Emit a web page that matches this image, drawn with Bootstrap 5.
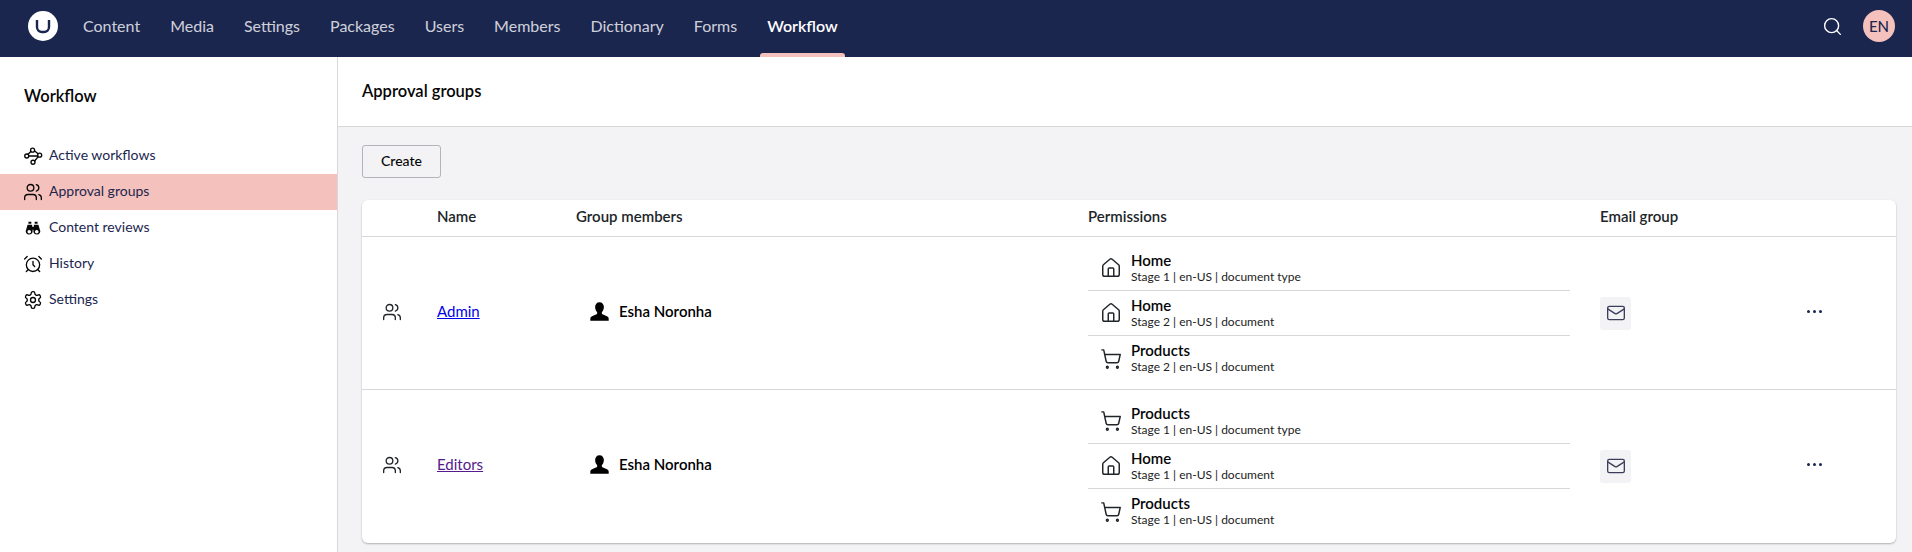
<!DOCTYPE html>
<html lang="en">
<head>
  <meta charset="UTF-8">
  <meta name="viewport" content="width=device-width, initial-scale=1.0">
  <title>Workflow - Approval groups</title>
  <link href="https://cdn.jsdelivr.net/npm/bootstrap@5.3.0/dist/css/bootstrap.min.css" rel="stylesheet">
  <style>
    body {
      font-family: Lato, "Liberation Sans", sans-serif;
      font-size: 14px;
      color: #060606;
      background-color: #f3f3f5;
    }
    .ico {
      fill: none;
      stroke: currentColor;
      stroke-width: 1.6;
      stroke-linecap: round;
      stroke-linejoin: round;
      flex-shrink: 0;
    }
    .ico-fill { fill: currentColor; stroke: none; flex-shrink: 0; }

    /* top bar */
    .topbar { height: 57px; background-color: #1b264f; padding: 0 17px 0 28px; }
    .brand-mark { width: 30px; height: 30px; margin-top: -5px; }
    .top-links { margin-left: 17px; gap: 14px; height: 57px; }
    .top-link {
      position: relative;
      padding: 0 8px;
      height: 57px;
      line-height: 52px;
      font-size: 16px;
      color: rgba(255, 255, 255, .8);
      text-decoration: none;
    }
    .top-link.on { color: #fff; font-weight: 600; }
    .top-link.on::after {
      content: "";
      position: absolute;
      left: 1px;
      right: 1px;
      bottom: 0;
      height: 4px;
      background-color: #f5c1bc;
      border-radius: 3px 3px 0 0;
    }
    .top-search { width: 21px; height: 21px; color: #fff; margin-right: 20px; margin-top: -5px; }
    .lang-dot {
      width: 32px;
      height: 32px;
      margin-top: -5px;
      font-size: 15px;
      font-weight: 500;
      color: #1b264f;
      background-color: #f5c1bc;
    }

    /* side menu */
    .side-menu { width: 338px; flex-shrink: 0; background-color: #fff; border-right: 1px solid #d8d7d9; }
    .side-title { font-size: 16.5px; font-weight: 600; padding: 0 24px; height: 81px; line-height: 79px; }
    .side-item {
      height: 36px;
      padding-left: 23px;
      padding-bottom: 3px;
      gap: 6px;
      color: #1b264f;
      text-decoration: none;
    }
    .side-item svg { margin-top: 3px; }
    .side-item.on { background-color: #f5c1bc; }
    .side-item .ico, .side-item .ico-fill { color: #060606; }

    /* main */
    .page-head { height: 70px; padding: 0 24px; line-height: 68px; font-size: 16.5px; font-weight: 600; background-color: #fff; border-bottom: 1px solid #d8d7d9; }
    .page-body { padding: 18px 16px 0 24px; }
    .create-btn {
      width: 79px;
      height: 33px;
      padding: 0 0 2px;
      font-size: 14px;
      font-weight: 500;
      color: #060606;
      border: 1px solid #b4b4b8;
      border-radius: 3px;
      margin-bottom: 22px;
    }

    .group-box { background-color: #fff; border-radius: 6px; box-shadow: 0 1px 2px rgba(0, 0, 0, .28); }
    .group-table { table-layout: fixed; border-collapse: separate; border-spacing: 0; --bs-table-bg: transparent; }
    .group-table th {
      height: 37px;
      padding: 0 12px 3px;
      font-size: 15px;
      font-weight: 600;
      vertical-align: middle;
      border-bottom: 1px solid #d8d7d9;
    }
    .group-table td {
      padding: 0 12px 4px;
      font-size: 15px;
      vertical-align: middle;
      border-bottom: 1px solid #d8d7d9;
    }
    .group-table tr:last-child td { border-bottom-color: transparent; }
    .group-table .perm-cell { padding: 0 12px; }
    .group-table .users-cell { padding-left: 20px; padding-bottom: 2px; }
    .group-table .mail-cell { padding-bottom: 0; }
    .w-icon { width: 63px; }
    .w-name { width: 139px; }
    .w-members { width: 512px; }
    .w-perms { width: 512px; }
    .w-email { width: 201px; }
    .name-link { color: #0000ee; }
    .name-link.seen { color: #551a8b; }
    .member { padding-left: 13px; gap: 9px; font-weight: 600; color: #000; }

    .perm-list { padding: 9px 6px 8px 0; }
    .perm-row { height: 45px; gap: 9px; padding-left: 12px; border-bottom: 1px solid #d8d7d9; }
    .perm-row:last-child { border-bottom: 0; }
    .perm-name { font-size: 15px; font-weight: 600; line-height: 17px; margin-top: -1px; color: #060606; }
    .perm-sub { font-size: 12px; line-height: 15px; color: #222; }

    .mail-btn {
      width: 31px;
      height: 33px;
      padding: 0;
      color: #3a3d5c;
      background-color: #f3f3f5;
      border: 0;
      border-radius: 3px;
    }
    .dots { gap: 3px; padding-left: 6px; }
    .dots i { width: 3px; height: 3px; border-radius: 50%; background-color: #1b264f; display: block; }
  </style>
</head>
<body class="d-flex flex-column vh-100 overflow-hidden">

  <svg width="0" height="0" class="position-absolute">
    <symbol id="i-users" viewBox="0 0 24 24"><path d="M16 21v-2a4 4 0 0 0-4-4H6a4 4 0 0 0-4 4v2"/><circle cx="9" cy="7" r="4"/><path d="M22 21v-2a4 4 0 0 0-3-3.87"/><path d="M16 3.13a4 4 0 0 1 0 7.75"/></symbol>
    <symbol id="i-flow" viewBox="0 0 24 24"><circle cx="4.500" cy="12" r="2.400"/><circle cx="11.500" cy="5" r="2.400"/><circle cx="20" cy="11" r="2.400"/><circle cx="12" cy="19.500" r="2.400"/><path d="M7 12h10.500M6 10l3.500-3.500M14 6l3.800 3M18 13l-4 5"/></symbol>
    <symbol id="i-alarm" viewBox="0 0 24 24"><circle cx="12" cy="13" r="8"/><path d="M12 9v4l2 2"/><path d="M5 3 2 6"/><path d="m22 6-3-3"/><path d="M6.38 18.7 4 21"/><path d="M17.64 18.67 20 21"/></symbol>
    <symbol id="i-gear" viewBox="0 0 24 24"><path d="M12.22 2h-.44a2 2 0 0 0-2 2v.18a2 2 0 0 1-1 1.73l-.43.25a2 2 0 0 1-2 0l-.15-.08a2 2 0 0 0-2.73.73l-.22.38a2 2 0 0 0 .73 2.73l.15.1a2 2 0 0 1 1 1.72v.51a2 2 0 0 1-1 1.74l-.15.09a2 2 0 0 0-.73 2.73l.22.38a2 2 0 0 0 2.73.73l.15-.08a2 2 0 0 1 2 0l.43.25a2 2 0 0 1 1 1.73V20a2 2 0 0 0 2 2h.44a2 2 0 0 0 2-2v-.18a2 2 0 0 1 1-1.73l.43-.25a2 2 0 0 1 2 0l.15.08a2 2 0 0 0 2.73-.73l.22-.39a2 2 0 0 0-.73-2.73l-.15-.08a2 2 0 0 1-1-1.74v-.5a2 2 0 0 1 1-1.74l.15-.09a2 2 0 0 0 .73-2.73l-.22-.38a2 2 0 0 0-2.73-.73l-.15.08a2 2 0 0 1-2 0l-.43-.25a2 2 0 0 1-1-1.73V4a2 2 0 0 0-2-2z"/><circle cx="12" cy="12" r="3"/></symbol>
    <symbol id="i-home" viewBox="0 0 24 24"><path d="M15 21v-8a1 1 0 0 0-1-1h-4a1 1 0 0 0-1 1v8"/><path d="M3 10a2 2 0 0 1 .709-1.528l7-5.999a2 2 0 0 1 2.582 0l7 5.999A2 2 0 0 1 21 10v9a2 2 0 0 1-2 2H5a2 2 0 0 1-2-2z"/></symbol>
    <symbol id="i-cart" viewBox="0 0 24 24"><circle cx="8" cy="21" r="1"/><circle cx="19" cy="21" r="1"/><path d="M2.05 2.05h2l2.66 12.42a2 2 0 0 0 2 1.58h9.78a2 2 0 0 0 1.95-1.57l1.65-7.43H5.12"/></symbol>
    <symbol id="i-mail" viewBox="0 0 24 24"><rect width="20" height="16" x="2" y="4" rx="2"/><path d="m22 7-8.97 5.7a1.94 1.94 0 0 1-2.06 0L2 7"/></symbol>
    <symbol id="i-search" viewBox="0 0 24 24"><circle cx="11" cy="11" r="8"/><path d="m21 21-4.3-4.3"/></symbol>
    <symbol id="i-binoculars" viewBox="0 0 24 24"><path fill-rule="evenodd" d="M6.500 4.500H10V7H6.500zM14 4.500h3.500V7H14zM5.500 8H11v2.500h2V8h5.500l2.300 8a4.200 4.200 0 0 1-8.300.5V14h-1v2.500a4.200 4.200 0 0 1-8.300-.5zM5.300 16.500a2.200 2.200 0 1 0 4.400 0a2.200 2.200 0 1 0-4.400 0zM14.300 16.500a2.200 2.200 0 1 0 4.400 0a2.200 2.200 0 1 0-4.400 0z"/></symbol>
    <symbol id="i-user" viewBox="0 0 24 24"><path d="M12 1.500c3.200 0 5 2.400 5 5.400 0 2.500-1 4.600-2.300 5.800v1.500c0 1 3.400 2 5.800 3.200 1.400.7 2 1.600 2 3.100v2H1.500v-2c0-1.500.6-2.400 2-3.100 2.400-1.200 5.800-2.200 5.800-3.200v-1.500C8 11.500 7 9.400 7 6.900c0-3 1.800-5.400 5-5.400z"/></symbol>
  </svg>

  <!-- Top bar -->
  <header class="topbar d-flex align-items-center flex-shrink-0">
    <svg class="brand-mark" viewBox="0 0 30 30">
      <circle cx="15" cy="15" r="15" fill="#fff"/>
      <path d="M9 9v7a5 5 0 0 0 5 5h2a5 5 0 0 0 5-5V9" fill="none" stroke="#1b264f" stroke-width="2.400"/>
    </svg>
    <nav class="top-links d-flex">
      <a class="top-link" href="#">Content</a>
      <a class="top-link" href="#">Media</a>
      <a class="top-link" href="#">Settings</a>
      <a class="top-link" href="#">Packages</a>
      <a class="top-link" href="#">Users</a>
      <a class="top-link" href="#">Members</a>
      <a class="top-link" href="#">Dictionary</a>
      <a class="top-link" href="#">Forms</a>
      <a class="top-link on" href="#">Workflow</a>
    </nav>
    <svg class="ico top-search ms-auto"><use href="#i-search"/></svg>
    <div class="lang-dot rounded-circle d-flex align-items-center justify-content-center">EN</div>
  </header>

  <div class="d-flex flex-grow-1">
    <!-- Side menu -->
    <aside class="side-menu">
      <div class="side-title">Workflow</div>
      <a class="side-item d-flex align-items-center" href="#"><svg class="ico" width="20" height="20"><use href="#i-flow"/></svg>Active workflows</a>
      <a class="side-item on d-flex align-items-center" href="#"><svg class="ico" width="20" height="20"><use href="#i-users"/></svg>Approval groups</a>
      <a class="side-item d-flex align-items-center" href="#"><svg class="ico-fill" width="20" height="20"><use href="#i-binoculars"/></svg>Content reviews</a>
      <a class="side-item d-flex align-items-center" href="#"><svg class="ico" width="20" height="20"><use href="#i-alarm"/></svg>History</a>
      <a class="side-item d-flex align-items-center" href="#"><svg class="ico" width="20" height="20"><use href="#i-gear"/></svg>Settings</a>
    </aside>

    <!-- Main -->
    <main class="flex-grow-1 d-flex flex-column">
      <div class="page-head">Approval groups</div>
      <div class="page-body">
        <button type="button" class="btn create-btn d-block">Create</button>
        <div class="group-box">
          <table class="table group-table mb-0">
            <colgroup>
              <col class="w-icon"><col class="w-name"><col class="w-members"><col class="w-perms"><col class="w-email"><col>
            </colgroup>
            <thead>
              <tr>
                <th></th>
                <th>Name</th>
                <th>Group members</th>
                <th>Permissions</th>
                <th>Email group</th>
                <th></th>
              </tr>
            </thead>
            <tbody id="groupRows"></tbody>
          </table>
        </div>
      </div>
    </main>
  </div>

  <script src="https://cdn.jsdelivr.net/npm/bootstrap@5.3.0/dist/js/bootstrap.bundle.min.js"></script>
  <script>
    const groups = [
      { name: 'Admin', seen: false, perms: [
        ['home', 'Home', 'Stage 1 | en-US | document type'],
        ['home', 'Home', 'Stage 2 | en-US | document'],
        ['cart', 'Products', 'Stage 2 | en-US | document']
      ]},
      { name: 'Editors', seen: true, perms: [
        ['cart', 'Products', 'Stage 1 | en-US | document type'],
        ['home', 'Home', 'Stage 1 | en-US | document'],
        ['cart', 'Products', 'Stage 1 | en-US | document']
      ]}
    ];

    function renderRows() {
      let html = '';
      groups.forEach(group => {
        const perms = group.perms.map(p => `
          <div class="perm-row d-flex align-items-center">
            <svg class="ico" width="22" height="22"><use href="#i-${p[0]}"/></svg>
            <div>
              <div class="perm-name">${p[1]}</div>
              <div class="perm-sub">${p[2]}</div>
            </div>
          </div>`).join('');
        html += `<tr>
          <td class="users-cell"><svg class="ico d-block" width="20" height="20"><use href="#i-users"/></svg></td>
          <td><a href="#" class="name-link ${group.seen ? 'seen' : ''}">${group.name}</a></td>
          <td><div class="member d-flex align-items-center"><svg class="ico-fill" width="21" height="21"><use href="#i-user"/></svg>Esha Noronha</div></td>
          <td class="perm-cell"><div class="perm-list">${perms}</div></td>
          <td class="mail-cell"><button type="button" class="mail-btn d-flex align-items-center justify-content-center"><svg class="ico" width="20" height="20"><use href="#i-mail"/></svg></button></td>
          <td><div class="dots d-flex"><i></i><i></i><i></i></div></td>
        </tr>`;
      });
      document.getElementById('groupRows').innerHTML = html;
    }

    renderRows();
  </script>
</body>
</html>
